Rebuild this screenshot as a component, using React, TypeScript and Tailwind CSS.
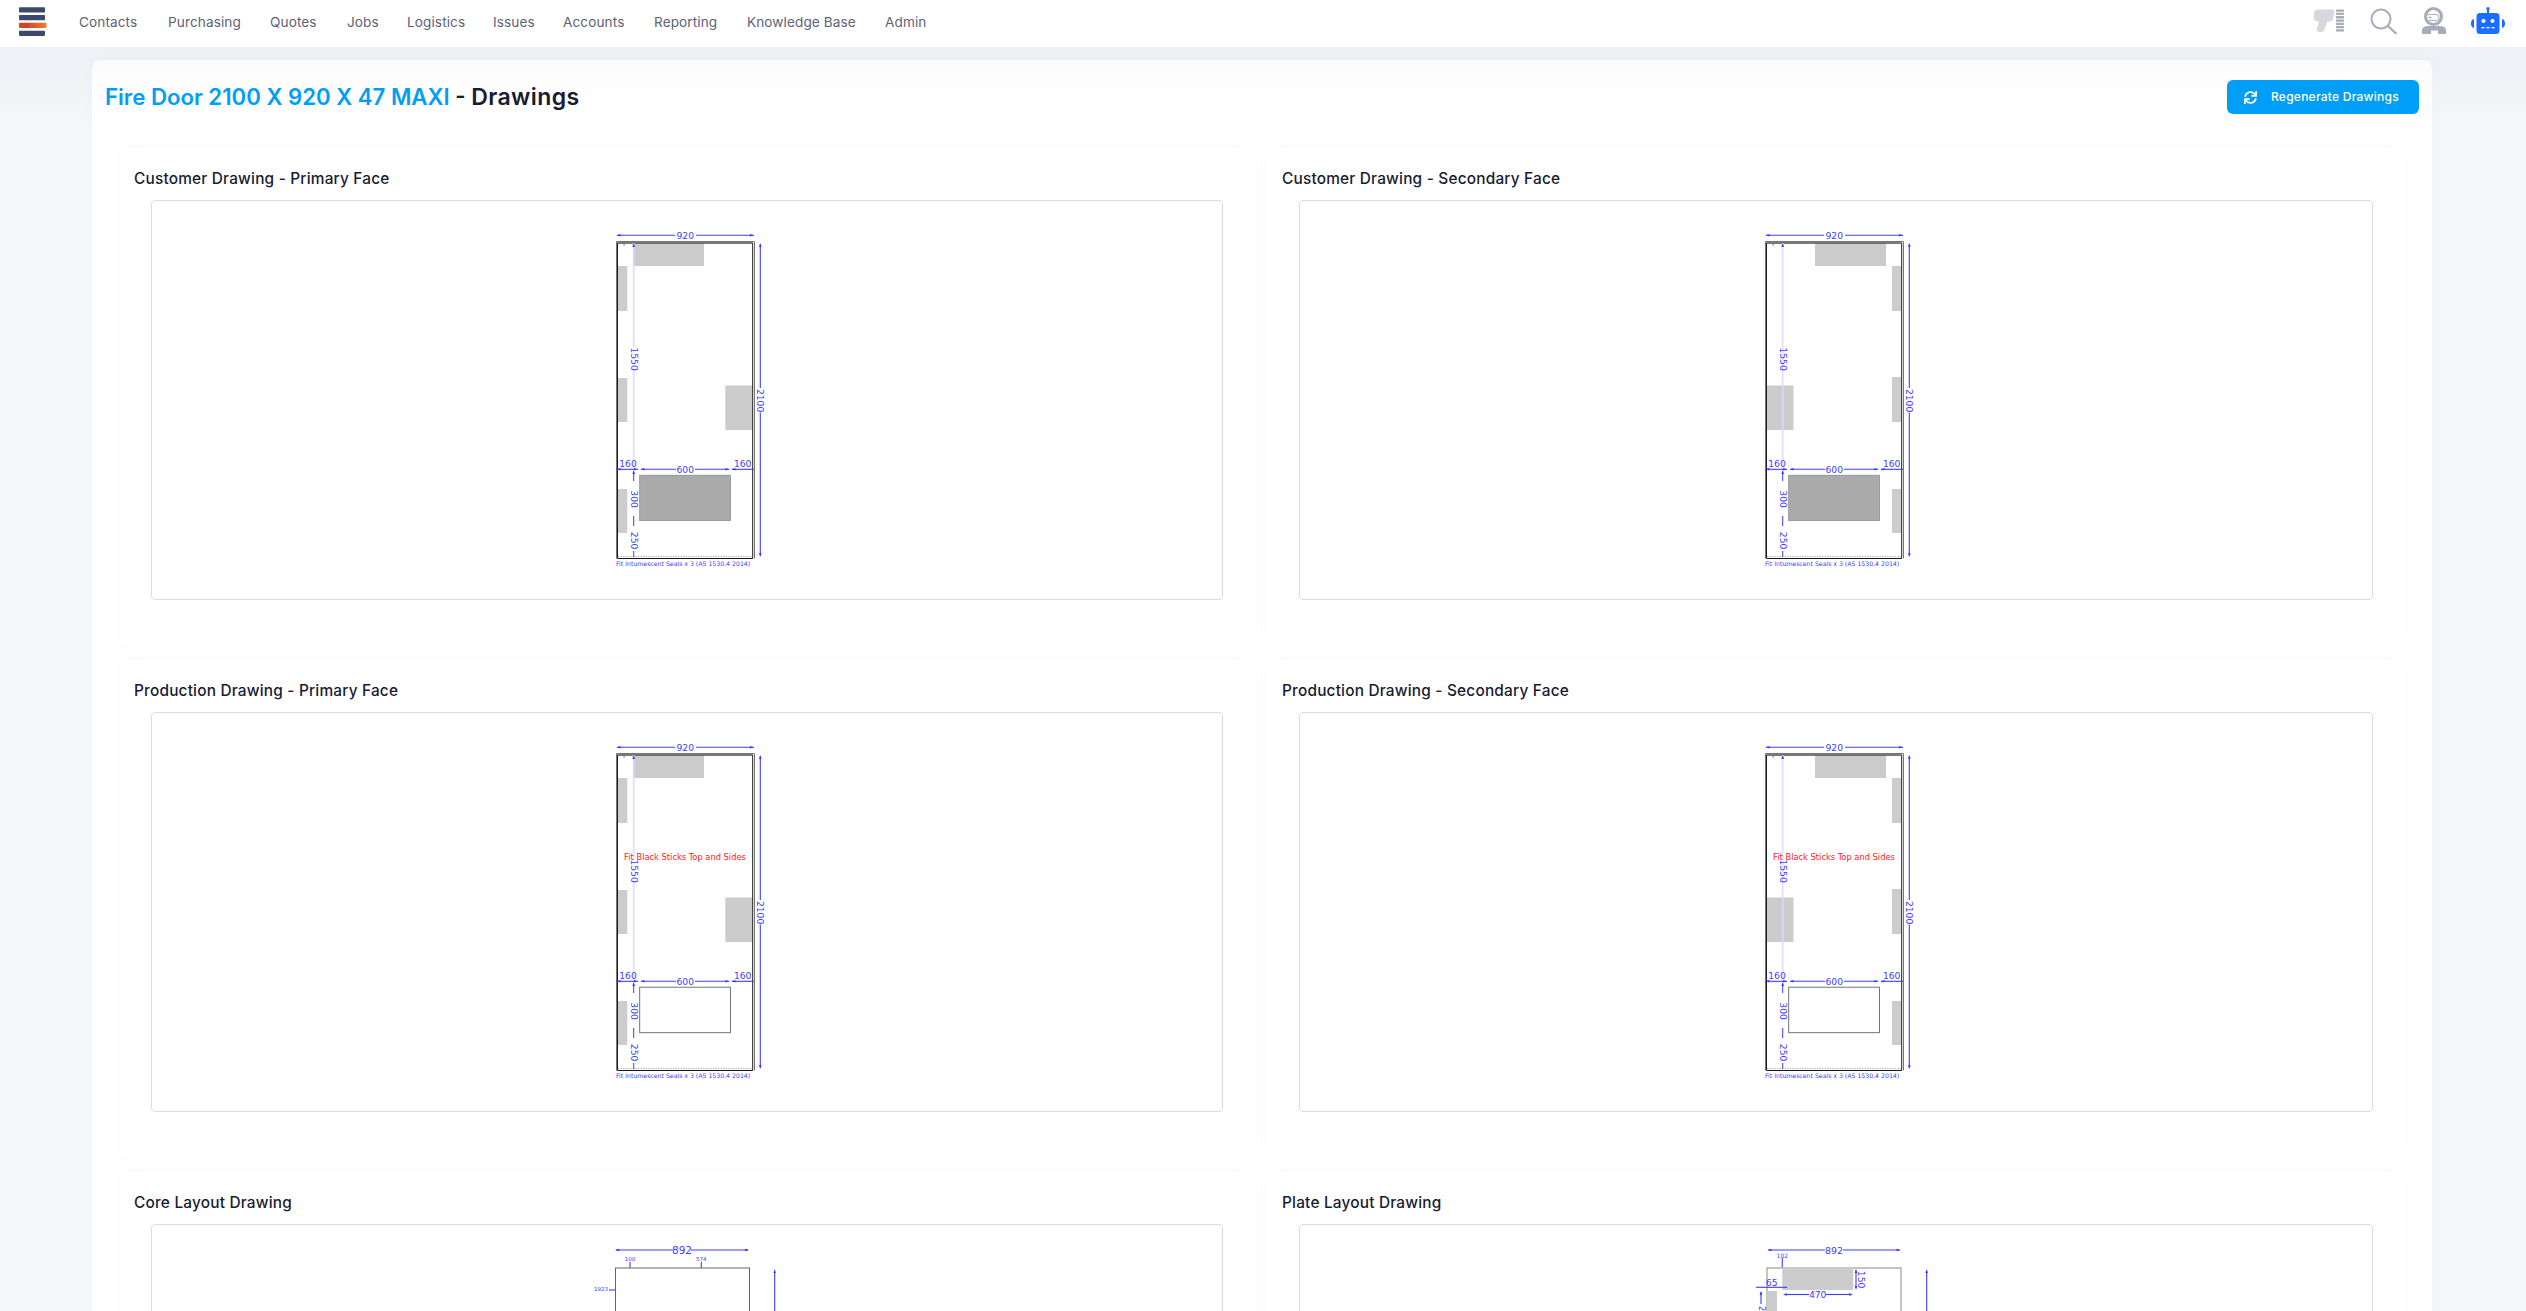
import type { ReactNode } from "react";
import { FaSync } from "react-icons/fa";

const BLUE = "#3c3cff";
const NAV = [
  { n: "Contacts", c: "w-[89px]" },
  { n: "Purchasing", c: "w-[102px]" },
  { n: "Quotes", c: "w-[77px]" },
  { n: "Jobs", c: "w-[60px]" },
  { n: "Logistics", c: "w-[86px]" },
  { n: "Issues", c: "w-[70px]" },
  { n: "Accounts", c: "w-[91px]" },
  { n: "Reporting", c: "w-[93px]" },
  { n: "Knowledge Base", c: "w-[138px]" },
  { n: "Admin", c: "w-[50px]" },
];
const DF = "'DejaVu Sans', sans-serif";

function T({ x, y, s = 9.2, r, c = BLUE, children }: { x: number; y: number; s?: number; r?: boolean; c?: string; children: string }) {
  const yy = y + 0.6;
  return (
    <text
      x={x}
      y={yy}
      fontSize={s}
      fill={c}
      fontFamily={DF}
      textAnchor="middle"
      dominantBaseline="central"
      transform={r ? `rotate(90 ${x} ${yy})` : undefined}
    >
      {children}
    </text>
  );
}

function Arrow({ x1, y1, x2, y2, w = 1.1 }: { x1: number; y1: number; x2: number; y2: number; w?: number }) {
  return <line x1={x1} y1={y1} x2={x2} y2={y2} stroke={BLUE} strokeWidth={w} />;
}

function HArrowHead({ x, y, dir }: { x: number; y: number; dir: 1 | -1 }) {
  return <path d={`M${x} ${y}l${dir * 4} -1.3v2.6z`} fill={BLUE} />;
}
function VArrowHead({ x, y, dir }: { x: number; y: number; dir: 1 | -1 }) {
  return <path d={`M${x} ${y}l-1.3 ${dir * 4}h2.6z`} fill={BLUE} />;
}

function Door({ secondary, production, dy }: { secondary?: boolean; production?: boolean; dy: number }) {
  const seals = secondary
    ? [[743, 266, 9, 45], [743, 377, 9, 45], [743, 489, 9, 44]]
    : [[618, 266, 9.3, 45], [618, 378, 9.3, 44], [618, 489, 9.3, 44]];
  const top = secondary ? [666, 71] : [633, 71];
  const big = secondary ? [618, 385.5, 26.5, 44.5] : [725.3, 385.5, 27, 44.5];
  return (
    <svg width={200} height={350} viewBox={`587 ${220 + dy} 200 350`} className="block">
      <g transform={`translate(0 ${dy})`}>
        <Arrow x1={617} y1={235.3} x2={675} y2={235.3} />
        <Arrow x1={696} y1={235.3} x2={754} y2={235.3} />
        <HArrowHead x={616.5} y={235.3} dir={1} />
        <HArrowHead x={754} y={235.3} dir={-1} />
        <T x={685.3} y={235}>920</T>
        <rect x={top[0]} y={243} width={top[1]} height={23} fill="#cccccc" />
        {seals.map((b, i) => (
          <rect key={i} x={b[0]} y={b[1]} width={b[2]} height={b[3]} fill="#cccccc" />
        ))}
        <rect x={big[0]} y={big[1]} width={big[2]} height={big[3]} fill="#cccccc" />
        <path d="M616.5 558.5V241.5H754.5V558.5" fill="none" stroke="#777" strokeWidth={1} />
        <path d="M617.5 558.5V243H752.7V558.5Z" fill="none" stroke="#1a1a1a" strokeWidth={1} />
        <line x1={617} y1={243} x2={753} y2={243} stroke="#666" strokeWidth={1.1} />
        <line x1={618} y1={556.6} x2={752} y2={556.6} stroke="#999" strokeWidth={0.7} strokeDasharray="1.5 1" />
        <rect x={623.5} y={243} width={1.2} height={2.5} fill="#777" />
        <rect x={632.8} y={243} width={1.8} height={225} fill="#dcdcff" opacity={0.85} />
        <VArrowHead x={633.7} y={243} dir={1} />
        <rect x={628} y={347} width={12} height={23} fill="#ffffff" opacity={secondary ? 0 : 0.6} />
        <T x={634} y={358.5} r>1550</T>
        <Arrow x1={760.3} y1={244} x2={760.3} y2={388} />
        <Arrow x1={760.3} y1={412.5} x2={760.3} y2={556} />
        <VArrowHead x={760.3} y={243} dir={1} />
        <VArrowHead x={760.3} y={557} dir={-1} />
        <T x={760.8} y={400} r>2100</T>
        <Arrow x1={616} y1={469.3} x2={638} y2={469.3} />
        <HArrowHead x={616.5} y={469.3} dir={1} />
        <HArrowHead x={638} y={469.3} dir={-1} />
        <HArrowHead x={640.5} y={469.3} dir={1} />
        <Arrow x1={641} y1={469.3} x2={676} y2={469.3} />
        <Arrow x1={695} y1={469.3} x2={729} y2={469.3} />
        <HArrowHead x={729.5} y={469.3} dir={-1} />
        <HArrowHead x={731.5} y={469.3} dir={1} />
        <Arrow x1={732} y1={469.3} x2={754} y2={469.3} />
        <T x={628} y={463}>160</T>
        <T x={742.7} y={463}>160</T>
        <T x={685.3} y={468.8}>600</T>
        <rect
          x={639.7}
          y={475.2}
          width={90.8}
          height={45.5}
          fill={production ? "#ffffff" : "#aaaaaa"}
          stroke={production ? "#666" : "#888"}
          strokeWidth={production ? 0.9 : 0.7}
        />
        <VArrowHead x={633.7} y={470} dir={1} />
        <Arrow x1={633.7} y1={472} x2={633.7} y2={481} w={1} />
        <T x={634} y={498.5} r>300</T>
        <Arrow x1={633.7} y1={516} x2={633.7} y2={526} w={1} />
        <T x={634} y={540} r>250</T>
        <Arrow x1={633.7} y1={551} x2={633.7} y2={557} w={1} />
        {production && <T x={685} y={344} s={8.3} c="#ff2020">Fit Black Sticks Top and Sides</T>}
        <text x={616} y={563.8} fontSize={6.2} fill={BLUE} fontFamily={DF} dominantBaseline="central">
          Fit Intumescent Seals x 3 (AS 1530.4 2014)
        </text>
      </g>
    </svg>
  );
}

function CoreDrawing() {
  return (
    <svg width={200} height={350} viewBox="587 1244 200 350" className="block">
      <Arrow x1={616} y1={1250} x2={673} y2={1250} />
      <Arrow x1={691} y1={1250} x2={748} y2={1250} />
      <HArrowHead x={615} y={1250} dir={1} />
      <HArrowHead x={749} y={1250} dir={-1} />
      <T x={682} y={1249.5} s={10.5}>892</T>
      <T x={630} y={1258.5} s={5.5}>100</T>
      <T x={701.3} y={1258.5} s={5.5}>574</T>
      <Arrow x1={630} y1={1262} x2={630} y2={1268} />
      <Arrow x1={701.3} y1={1262} x2={701.3} y2={1268} />
      <rect x={615.5} y={1268} width={134} height={120} fill="#fff" stroke="#666" strokeWidth={1} />
      <T x={601} y={1288.5} s={5.5}>1923</T>
      <Arrow x1={609} y1={1290} x2={615} y2={1290} />
      <Arrow x1={774.7} y1={1272} x2={774.7} y2={1400} />
      <VArrowHead x={774.7} y={1269} dir={1} />
    </svg>
  );
}

function PlateDrawing() {
  return (
    <svg width={200} height={350} viewBox="1736 1244 200 350" className="block">
      <Arrow x1={1768} y1={1250} x2={1825} y2={1250} />
      <Arrow x1={1843} y1={1250} x2={1900} y2={1250} />
      <HArrowHead x={1767.5} y={1250} dir={1} />
      <HArrowHead x={1900.5} y={1250} dir={-1} />
      <T x={1834} y={1249.5} s={9.5}>892</T>
      <T x={1782.3} y={1254.5} s={6}>102</T>
      <Arrow x1={1782.3} y1={1258} x2={1782.3} y2={1268} />
      <rect x={1767} y={1268} width={134} height={120} fill="#fff" stroke="#888" strokeWidth={1} />
      <rect x={1782.3} y={1267.5} width={71} height={22.5} fill="#cccccc" />
      <rect x={1767} y={1291} width={10} height={60} fill="#cccccc" />
      <Arrow x1={1856} y1={1270} x2={1856} y2={1288} />
      <VArrowHead x={1856} y={1269} dir={1} />
      <VArrowHead x={1856} y={1290} dir={-1} />
      <T x={1861} y={1279} r>150</T>
      <Arrow x1={1784} y1={1294.5} x2={1809} y2={1294.5} />
      <Arrow x1={1826} y1={1294.5} x2={1852} y2={1294.5} />
      <HArrowHead x={1783} y={1294.5} dir={1} />
      <HArrowHead x={1853} y={1294.5} dir={-1} />
      <T x={1817.7} y={1294}>470</T>
      <T x={1771.7} y={1282}>65</T>
      <Arrow x1={1756} y1={1287.3} x2={1787} y2={1287.3} />
      <Arrow x1={1761} y1={1292} x2={1761} y2={1304} />
      <VArrowHead x={1761} y={1291} dir={1} />
      <T x={1761} y={1308} s={8} r>2</T>
      <Arrow x1={1926.7} y1={1272} x2={1926.7} y2={1400} />
      <VArrowHead x={1926.7} y={1269} dir={1} />
    </svg>
  );
}

function Panel({ title, wide, children }: { title: string; wide?: boolean; children: ReactNode }) {
  return (
    <div className="h-[497px] rounded-lg bg-white px-[14px] pt-[21px] shadow-[0_0_12px_rgba(120,130,160,0.035)]">
      <h3 className="h-[31px] text-[15.4px] font-medium leading-[19px] tracking-[0.2px] text-[#181c32]">{title}</h3>
      <div
        className={`ml-[17px] flex h-[400px] items-start justify-center rounded border border-[#dcdcdc] bg-white pt-[19px] ${
          wide ? "w-[1074px]" : "w-[1072px]"
        }`}
      >
        {children}
      </div>
    </div>
  );
}

export default function App() {
  return (
    <div
      className="h-[1311px] w-full overflow-hidden bg-[#f5f8fa]"
      style={{ fontFamily: "Inter, 'Open Sans', sans-serif" }}
    >
      <header className="flex h-[47px] items-center bg-white pl-[19px] pr-[21px]">
        <svg width={28} height={30} viewBox="0 0 28 30" className="mb-[3px] mr-[32px] shrink-0">
          <defs>
            <linearGradient id="lg" x1="0" x2="1" y1="0" y2="0">
              <stop offset="0.3" stopColor="#d3452b" />
              <stop offset="1" stopColor="#f57f20" />
            </linearGradient>
          </defs>
          <rect x="0" y="0.3" width="26" height="5.3" rx="0.8" fill="#3b4a6b" />
          <rect x="0" y="8" width="26" height="5.200" rx="0.8" fill="#3b4a6b" />
          <rect x="0" y="15.700" width="27.5" height="5.200" rx="0.8" fill="url(#lg)" />
          <rect x="0" y="23.700" width="26" height="5.200" rx="0.8" fill="#3b4a6b" />
        </svg>
        <nav className="flex items-center pb-[3px] text-[13.6px] tracking-[0.1px] text-[#5e6278]">
          {NAV.map((i) => (
            <span key={i.n} className={i.c}>{i.n}</span>
          ))}
        </nav>
        <div className="ml-auto flex items-center pb-[6px]">
          <svg width={30} height={24} viewBox="0 0 30 24" className="mr-[26px]">
            <path d="M3.500 0.500h14.500c1.600 0 2.800 1.300 2.400 2.900l-1.300 6.400c-.3 1.300-1.200 2.100-2.400 2.400l-3.600 1-2.600 7.300c-.6 1.700-2 2.700-3.800 2.700H5.500c-2 0-3.100-1.700-2.600-3.600l2-7.100H3.600C1.600 12.500 0 11 0 9V4C0 2 1.500 0.500 3.500 0.500z" fill="#d6d8de" />
            {[0.500, 3.800, 7.100, 10.400, 13.700, 17, 20.300].map((y) => (
              <rect key={y} x="22" y={y} width="8" height="2.300" rx="0.5" fill="#a9abb9" />
            ))}
          </svg>
          <svg width={28} height={26} viewBox="0 0 28 26" className="mr-[24px]">
            <circle cx="11" cy="11" r="9.500" fill="none" stroke="#a9abb9" strokeWidth="2" />
            <path d="M18 18l8 7.500" stroke="#a9abb9" strokeWidth="2.200" strokeLinecap="round" />
          </svg>
          <svg width={24} height={27} viewBox="0 0 24 27" className="mr-[25px]">
            <circle cx="11.500" cy="9.500" r="8" fill="none" stroke="#a9abb9" strokeWidth="3" />
            <path d="M5 7.500h9a3 3 0 0 1 0 6H7" fill="none" stroke="#a9abb9" strokeWidth="1" />
            <path d="M6.500 10.500h3M8 9v3" stroke="#a9abb9" strokeWidth="0.8" />
            <path d="M0 27v-3.500C0 19.800 3.500 19 7.500 19h9c4 0 7.500 .8 7.500 4.500V27h-8v-3.500H9V27z" fill="#a9abb9" />
          </svg>
          <svg width={34} height={27} viewBox="0 0 34 27" className="shrink-0">
            <rect x="5.500" y="6" width="23" height="21" rx="3.500" fill="#1a6dff" />
            <rect x="16" y="1" width="2" height="6" fill="#1a6dff" />
            <circle cx="17" cy="1.800" r="1.700" fill="#1a6dff" />
            <path d="M3 12C1 12.500 0 14 0 16.500s1 4 3 4.500zM31 12c2 .5 3 2 3 4.500s-1 4-3 4.500z" fill="#1a6dff" />
            <circle cx="12.500" cy="14" r="2" fill="#fff" />
            <circle cx="21.500" cy="14" r="2" fill="#fff" />
            <rect x="10.500" y="20" width="3" height="1.300" fill="#fff" />
            <rect x="15.500" y="20" width="3" height="1.300" fill="#fff" />
            <rect x="20.500" y="20" width="3" height="1.300" fill="#fff" />
          </svg>
        </div>
      </header>
      <main className="bg-[linear-gradient(#edf0f4,#f5f8fa_80px)] pl-[92px] pr-[94px] pt-[13px]">
        <div className="rounded-lg bg-[linear-gradient(#fbfbfb,#ffffff_40px)] shadow-[0_0_14px_rgba(120,130,160,0.03)]">
          <div className="flex h-[88px] items-start justify-between px-[13px] pt-[20px]">
            <h1 className="text-[22.2px] font-semibold leading-[33px] text-[#181c32]">
              <span className="text-[#009ef7]">Fire Door 2100 X 920 X 47 MAXI</span>
              <span> - </span>
              <span className="text-[23px] tracking-[0.4px]">Drawings</span>
            </h1>
            <button className="flex h-[34px] w-[192px] items-center rounded-md bg-[#009ef7] pl-[17px] text-[12px] font-medium tracking-[0.25px] text-white">
              <FaSync className="mr-[14px] h-[13px] w-[13px]" />
              Regenerate Drawings
            </button>
          </div>
          <div className="grid grid-cols-[1134px_1fr] gap-x-[14px] gap-y-[15px] px-[28px]">
            <Panel title="Customer Drawing - Primary Face"><Door dy={0} /></Panel>
            <Panel wide title="Customer Drawing - Secondary Face"><Door dy={0} secondary /></Panel>
            <Panel title="Production Drawing - Primary Face"><Door dy={512} production /></Panel>
            <Panel wide title="Production Drawing - Secondary Face"><Door dy={512} secondary production /></Panel>
            <Panel title="Core Layout Drawing"><CoreDrawing /></Panel>
            <Panel wide title="Plate Layout Drawing"><PlateDrawing /></Panel>
          </div>
        </div>
      </main>
    </div>
  );
}
